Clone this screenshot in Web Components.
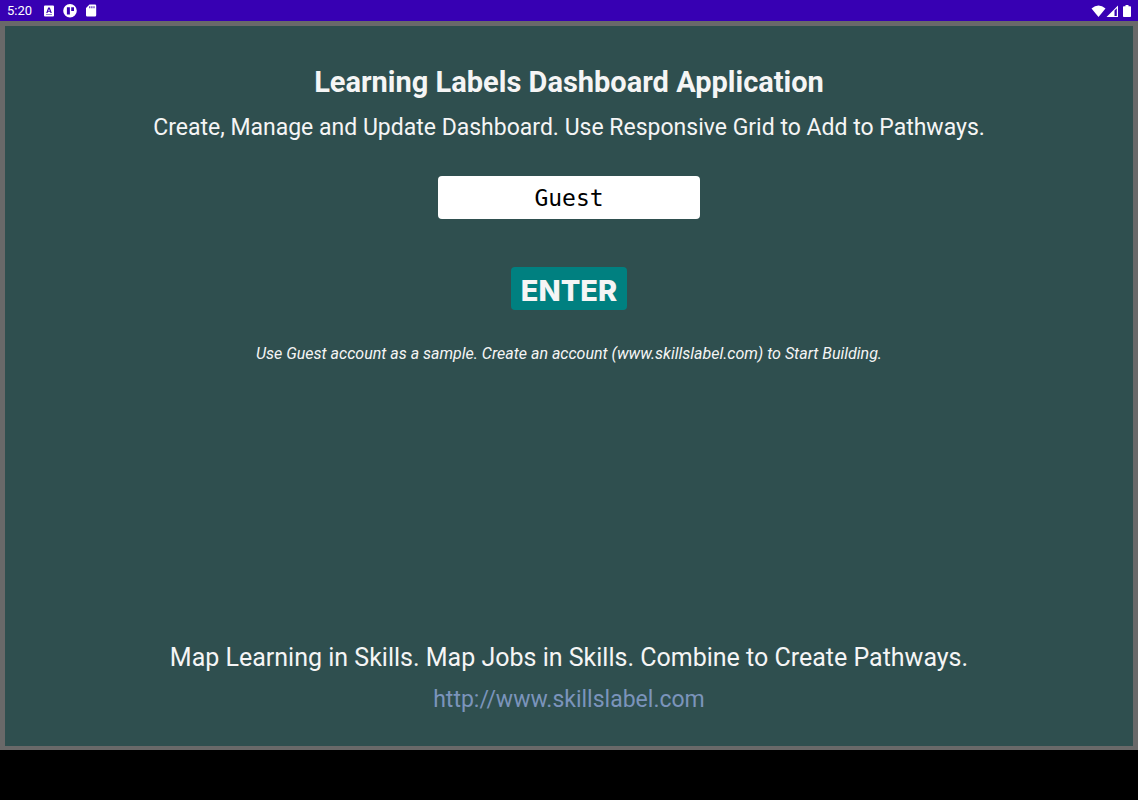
<!DOCTYPE html>
<html lang="en">
<head>
<meta charset="utf-8">
<meta name="viewport" content="width=device-width, initial-scale=1">
<title>Learning Labels Dashboard</title>
<style>
  body { margin: 0; background: #000; font-family: Roboto, sans-serif; color: #f5f5f5; }
</style>
</head>
<body>
<device-screen>
  <status-bar slot="top" time="5:20"></status-bar>
  <welcome-panel>
    <page-heading slot="header">
      Learning Labels Dashboard Application
      <span slot="subtitle">Create, Manage and Update Dashboard. Use Responsive Grid to Add to Pathways.</span>
    </page-heading>
    <login-form account="Guest">Use Guest account as a sample. Create an account (www.skillslabel.com) to Start Building.</login-form>
    <page-footer slot="footer" href="http://www.skillslabel.com">Map Learning in Skills. Map Jobs in Skills. Combine to Create Pathways.</page-footer>
  </welcome-panel>
</device-screen>
<script>
  class BaseElement extends HTMLElement {
    constructor() {
      super();
      this.attachShadow({ mode: 'open' }).innerHTML = this.constructor.markup;
    }
  }

  customElements.define('device-screen', class extends BaseElement {
    static markup = `
      <style>
        :host { display: flex; flex-direction: column; box-sizing: border-box; min-height: 100vh; padding-bottom: 50px; background: #000; }
        main { flex: 1; display: flex; flex-direction: column; }
      </style>
      <slot name="top"></slot><main><slot></slot></main>`;
  });

  customElements.define('status-bar', class extends BaseElement {
    static markup = `
      <style>
        :host { display: flex; align-items: center; justify-content: space-between; height: 21px; padding: 0 4px 0 7px; background: #3700b3; color: #fff; font-size: 13px; line-height: 21px; }
        div { display: flex; align-items: center; }
        .notes { gap: 7px; }
        time { margin-right: 3px; }
        svg { display: block; fill: #fff; }
      </style>
      <div class="notes">
        <time></time>
        <svg width="14" height="14" viewBox="0 0 14 14"><path fill-rule="evenodd" d="M3 1.500h8q1 0 1 1v9q0 1-1 1H3q-1 0-1-1v-9q0-1 1-1zM6.200 3.500 4.200 9h1.300l.4-1.200h2.200L8.500 9h1.300l-2-5.500zM7 4.800l.7 2.100H6.300zM4 10.600v.5h6v-.5z"/></svg>
        <svg width="14" height="14" viewBox="0 0 14 14"><path fill-rule="evenodd" d="M7 0a6.800 6.800 0 1 0 0 13.600A6.800 6.800 0 0 0 7 0zM3.900 3.300h3v7.200h-3zM8.200 3.300h2.800v3.600H8.200z"/></svg>
        <svg width="14" height="14" viewBox="0 0 14 14"><path fill-rule="evenodd" d="M5.500 .5H11q1.200 0 1.200 1.200v9.600Q12.200 12.500 11 12.500H3.200Q2 12.500 2 11.300V4zM5.300 2.300v2h1v-2zM7.400 2.300v2h1v-2zM9.500 2.300v2h1v-2z"/></svg>
      </div>
      <div>
        <svg width="15" height="12" viewBox="0 0 15 12"><path d="M.5 3.500Q7.500-2.500 14.500 3.500L7.500 12z"/></svg>
        <svg width="13" height="12" viewBox="0 0 13 12"><path fill-rule="evenodd" d="M12 .5V12H.5zM10.800 3.300 8.500 5.600v5.300h2.300z"/></svg>
        <svg width="15" height="12" viewBox="0 0 15 12"><path d="M6.500 0h3v1.300h1.700q.8 0 .8.800v9.100q0 .8-.8.800H4.800q-.8 0-.8-.8V2.100q0-.8.8-.8h1.700z"/></svg>
      </div>`;
    connectedCallback() {
      this.shadowRoot.querySelector('time').textContent = this.getAttribute('time');
    }
  });

  customElements.define('welcome-panel', class extends BaseElement {
    static markup = `
      <style>
        :host { flex: 1; display: flex; flex-direction: column; box-sizing: border-box; padding: 36px 16px 30px; border: 5px solid #696969; border-bottom-width: 4px; background: #2f4f4f; text-align: center; }
        .content { flex: 1; }
      </style>
      <slot name="header"></slot>
      <div class="content"><slot></slot></div>
      <slot name="footer"></slot>`;
  });

  customElements.define('page-heading', class extends BaseElement {
    static markup = `
      <style>
        :host { display: block; }
        h1, p { margin: 0; }
        h1 { font-size: 29px; line-height: 40px; font-weight: 700; }
        p { margin-top: 10px; font-size: 23px; line-height: 32px; }
      </style>
      <h1><slot></slot></h1>
      <p><slot name="subtitle"></slot></p>`;
  });

  customElements.define('login-form', class extends BaseElement {
    static markup = `
      <style>
        :host { display: block; margin-top: 32px; }
        form { display: flex; flex-direction: column; align-items: center; }
        input, button { box-sizing: border-box; height: 43px; border: 0; border-radius: 4px; }
        input { width: 262px; max-width: 100%; padding: 0 8px; background: #fff; color: #000; font: 23px "DejaVu Sans Mono", monospace; text-align: center; }
        button { width: 116px; margin-top: 48px; padding: 4px 0 0; background: #008080; color: #f5f5f5; font: 800 29px/39px Inter, sans-serif; }
        p { margin: 32px 0 0; font-size: 16px; line-height: 24px; font-style: italic; }
      </style>
      <form>
        <input type="text" aria-label="Account name">
        <button type="button">ENTER</button>
        <p><slot></slot></p>
      </form>`;
    connectedCallback() {
      this.shadowRoot.querySelector('input').value = this.getAttribute('account');
    }
  });

  customElements.define('page-footer', class extends BaseElement {
    static markup = `
      <style>
        :host { display: block; font-size: 25px; line-height: 32px; }
        p { margin: 0; }
        a { display: inline-block; margin-top: 10px; color: #7b94bb; font-size: 23px; text-decoration: none; }
      </style>
      <p><slot></slot></p>
      <a></a>`;
    connectedCallback() {
      const link = this.shadowRoot.querySelector('a');
      link.href = link.textContent = this.getAttribute('href');
    }
  });
</script>
</body>
</html>
